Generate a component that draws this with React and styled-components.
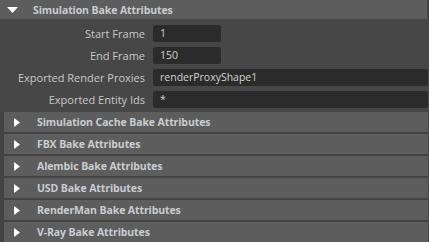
import styled, { createGlobalStyle } from 'styled-components';

const GlobalStyle = createGlobalStyle`
  body {
    margin: 0;
    background: #444444;
    font-family: "Open Sans", "Noto Sans", sans-serif;
  }
`;

const Panel = styled.div`
  width: 429px;
  height: 242px;
  background: #444444;
  overflow: hidden;
  display: flex;
  flex-direction: column;
`;

const Header = styled.div`
  display: flex;
  align-items: center;
  height: ${(p) => (p.$open ? '19px' : '20px')};
  margin: ${(p) => (p.$open ? '0 2px 0 0' : '0 1px 2px 4px')};
  background: #5d5d5d;
  color: #c9ccd1;
  font-size: 10.5px;
  letter-spacing: -0.1px;
  font-weight: 700;
  flex-shrink: 0;
`;

const Arrow = styled.span`
  display: flex;
  align-items: center;
  width: 33px;
  padding-left: ${(p) => (p.$open ? '7px' : '10px')};
  box-sizing: border-box;
`;

const Body = styled.div`
  display: grid;
  grid-template-columns: 145px 1fr;
  column-gap: 8px;
  row-gap: 5px;
  padding: 6px 1px 4px 0;
  background: #474747;
`;

const Label = styled.div`
  text-align: right;
  color: #c8c8c8;
  font-size: 11px;
  line-height: 17px;
  height: 17px;
`;

const Field = styled.div`
  height: 17px;
  width: ${(p) => (p.$short ? '68px' : 'auto')};
  background: #2b2b2b;
  border-radius: 2px;
  color: #d2d2d2;
  font-size: 10.5px;
  line-height: 17px;
  padding-left: 7px;
  box-sizing: border-box;
`;

const DownTri = () => (
  <svg width="11" height="6" viewBox="0 0 11 6">
    <polygon points="0,0 11,0 5.5,6" fill="#ffffff" />
  </svg>
);

const RightTri = () => (
  <svg width="6" height="9" viewBox="0 0 6 9">
    <polygon points="0,0 6,4.5 0,9" fill="#ffffff" />
  </svg>
);

const rows = [
  ['Start Frame', '1', true],
  ['End Frame', '150', true],
  ['Exported Render Proxies', 'renderProxyShape1', false],
  ['Exported Entity Ids', '*', false],
];

const collapsed = [
  'Simulation Cache Bake Attributes',
  'FBX Bake Attributes',
  'Alembic Bake Attributes',
  'USD Bake Attributes',
  'RenderMan Bake Attributes',
  'V-Ray Bake Attributes',
];

export default function App() {
  return (
    <>
      <GlobalStyle />
      <Panel>
        <Header $open>
          <Arrow $open>
            <DownTri />
          </Arrow>
          Simulation Bake Attributes
        </Header>
        <Body>
          {rows.flatMap(([label, value, short]) => [
            <Label key={label}>{label}</Label>,
            <Field key={label + '-f'} $short={short}>{value}</Field>,
          ])}
        </Body>
        {collapsed.map((t) => (
          <Header key={t}>
            <Arrow>
              <RightTri />
            </Arrow>
            {t}
          </Header>
        ))}
      </Panel>
    </>
  );
}
